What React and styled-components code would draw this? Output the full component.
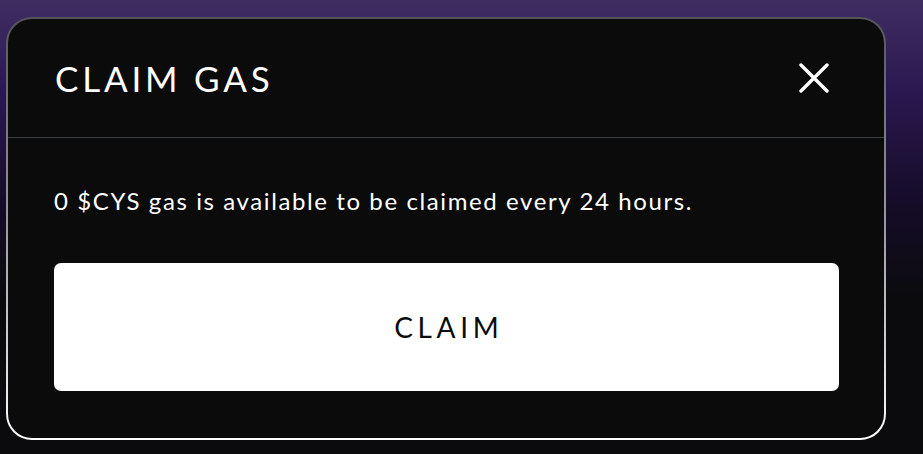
import React from "react";
import styled, { createGlobalStyle } from "styled-components";

const GlobalStyle = createGlobalStyle`
  html, body {
    margin: 0;
    padding: 0;
  }
  body {
    background: #0b0b0e;
    font-family: "Lato", "Open Sans", sans-serif;
  }
`;

const Page = styled.div`
  width: 923px;
  height: 454px;
  box-sizing: border-box;
  padding: 17px 0 0 6px;
  background: linear-gradient(
    180deg,
    #3f2d62 0%,
    #2a1850 20%,
    #150c28 45%,
    #0b0b0e 65%
  );
  overflow: hidden;
`;

const Modal = styled.div`
  width: 880px;
  height: 423px;
  box-sizing: border-box;
  border: 2px solid transparent;
  border-radius: 26px;
  background: linear-gradient(#0b0b0b, #0b0b0b) padding-box,
    linear-gradient(180deg, #55545a 0%, #9a9aa0 50%, #ffffff 100%) border-box;
  display: flex;
  flex-direction: column;
  overflow: hidden;
`;

const Header = styled.div`
  height: 118px;
  display: flex;
  align-items: center;
  justify-content: space-between;
  padding: 0 54px 0 47px;
  border-bottom: 1px solid #3a3e44;
`;

const Title = styled.h2`
  margin: 0;
  color: #fff;
  font-size: 35px;
  font-weight: 400;
  letter-spacing: 3.8px;
`;

const CloseButton = styled.button`
  background: none;
  border: none;
  padding: 0;
  width: 32px;
  height: 32px;
  cursor: pointer;
  display: flex;
  align-items: center;
  justify-content: center;
`;

const Body = styled.div`
  flex: 1;
  display: flex;
  flex-direction: column;
  padding: 48px 45px 0 46px;
`;

const Info = styled.p`
  margin: 0;
  color: #fff;
  font-size: 24px;
  line-height: 30px;
  letter-spacing: 1.6px;
`;

const ClaimButton = styled.button`
  margin-top: 47px;
  height: 128px;
  width: 100%;
  background: #fff;
  border: none;
  border-radius: 7px;
  color: #0b0b0b;
  font-family: "Lato", "Open Sans", sans-serif;
  font-size: 28px;
  letter-spacing: 4.7px;
  padding: 0 0 0 4.7px;
  cursor: pointer;
`;

export default function App() {
  return (
    <>
      <GlobalStyle />
      <Page>
        <Modal>
          <Header>
            <Title>CLAIM GAS</Title>
            <CloseButton aria-label="close">
              <svg width="30" height="30" viewBox="0 0 30 30">
                <path
                  d="M2 2 L28 28 M28 2 L2 28"
                  stroke="#fff"
                  strokeWidth="3.4"
                  strokeLinecap="round"
                />
              </svg>
            </CloseButton>
          </Header>
          <Body>
            <Info>0 $CYS gas is available to be claimed every 24 hours.</Info>
            <ClaimButton>CLAIM</ClaimButton>
          </Body>
        </Modal>
      </Page>
    </>
  );
}
